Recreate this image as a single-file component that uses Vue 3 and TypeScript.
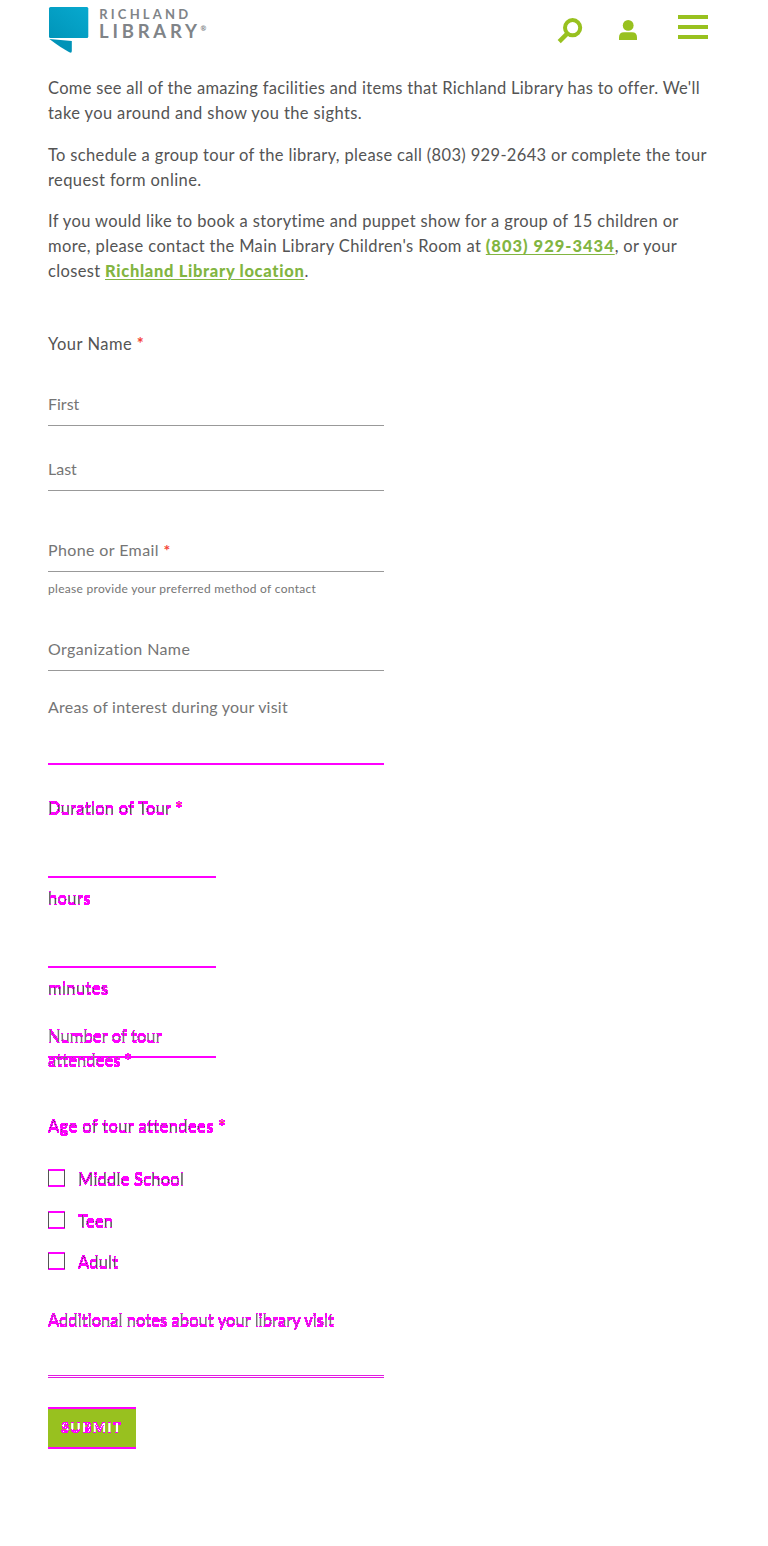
<script setup lang="ts">
interface Choice {
  id: string
  label: string
}

const ages: Choice[] = [
  { id: 'middle', label: 'Middle School' },
  { id: 'teen', label: 'Teen' },
  { id: 'adult', label: 'Adult' },
]
</script>

<template>
  <div class="page">
    <!-- Marks the edges between a shape and its vertically offset copy -->
    <svg class="defs" width="0" height="0" aria-hidden="true">
      <filter id="edge1" x="-5" y="-5" width="800" height="200" filterUnits="userSpaceOnUse" color-interpolation-filters="sRGB">
        <feOffset in="SourceAlpha" dy="1" result="moved" />
        <feComposite in="SourceAlpha" in2="moved" operator="arithmetic" k2="1" k3="-1" result="up" />
        <feComposite in="moved" in2="SourceAlpha" operator="arithmetic" k2="1" k3="-1" result="down" />
        <feMerge result="both"><feMergeNode in="up" /><feMergeNode in="down" /></feMerge>
        <feComponentTransfer in="both" result="mask"><feFuncA type="linear" slope="30" intercept="-2.4" /></feComponentTransfer>
        <feFlood flood-color="#ff00ff" />
        <feComposite in2="mask" operator="in" result="tint" />
        <feMerge><feMergeNode in="SourceGraphic" /><feMergeNode in="tint" /></feMerge>
      </filter>
    </svg>

    <header class="header">
      <svg class="logo" width="160" height="50" viewBox="0 0 160 50" role="img" aria-label="Richland Library">
        <defs>
          <linearGradient id="flag" x1="1" y1="0" x2="0" y2="1">
            <stop offset="0" stop-color="#08a9cf" />
            <stop offset="1" stop-color="#0095b9" />
          </linearGradient>
        </defs>
        <rect x="1" y="3" width="39.3" height="31" rx="1.5" fill="url(#flag)" />
        <path d="M1.3 35 L23.8 37 V47 Q23.8 49.6 21.3 48.2 L12.5 43 Q6 38.5 1.3 35Z" fill="#0093b8" />
        <text class="brand" x="51.2" y="14.6" font-size="13" textLength="89" lengthAdjust="spacing">RICHLAND</text>
        <text class="brand" x="51" y="34" font-size="18.5" textLength="98" lengthAdjust="spacing">LIBRARY</text>
        <text class="brand" x="152.4" y="26.5" font-size="7">®</text>
      </svg>
      <nav class="tools">
        <svg class="search" width="26" height="26" viewBox="0 0 26 26" fill="none" stroke="#98c11f" stroke-width="4">
          <circle cx="15.6" cy="9.7" r="7.6" /><path d="M10.2 15.6 L2.2 23.6" stroke-width="4.4" />
        </svg>
        <svg class="user" width="18" height="20" viewBox="0 0 18 20" fill="#98c11f">
          <circle cx="9.2" cy="5.4" r="5.4" /><path d="M0 20 V17.5 Q0 12.2 5 12.2 H13 Q18 12.2 18 17.5 V20Z" />
        </svg>
        <div class="menu"><i></i><i></i><i></i></div>
      </nav>
    </header>

    <main>
      <div class="intro">
        <p><span class="l1">Come see all of the amazing facilities and items that Richland Library has to offer. We'll</span><br /><span class="l2">take you around and show you the sights.</span></p>
        <p>To schedule a group tour of the library, please call (803) 929-2643 or complete the tour<br /><span class="l2">request form online.</span></p>
        <p><span class="l5">If you would like to book a storytime and puppet show for a group of 15 children or</span><br /><span class="l6">more, please contact the Main Library Children's Room at </span><a class="tel">(803) 929-3434</a><span class="l7">, or your</span><br />closest <a>Richland Library location</a>.</p>
      </div>

      <form class="form" @submit.prevent>
        <div class="legend"><span class="yn">Your Name</span> <b class="red">*</b></div>
        <div class="field first"><span class="tight">First</span></div>
        <div class="field last"><span class="tight">Last</span></div>
        <div class="field phone"><span>Phone or Email</span> <b class="red">*</b></div>
        <div class="help">please provide your preferred method of contact</div>
        <div class="field org"><span>Organization Name</span></div>
        <div class="areas">Areas of interest during your visit</div>
        <div class="rule edge areas-rule"></div>

        <div class="row edge duration">Duration of Tour <b class="red">*</b></div>
        <div class="rule short edge r1"></div>
        <div class="row edge hours">hours</div>
        <div class="rule short edge r2"></div>
        <div class="row edge minutes">minutes</div>
        <div class="attendees edge">
          <div><span class="num">Number of tour</span><br /><span>attendees <b class="red">*</b></span></div>
          <div class="rule short over"></div>
        </div>

        <div class="row edge age">Age of tour attendees <b class="red">*</b></div>
        <div class="choices">
          <label v-for="c in ages" :key="c.id" :class="['choice', c.id]">
            <i class="box edge"></i><span class="edge">{{ c.label }}</span>
          </label>
        </div>

        <div class="row edge notes">Additional notes about your library visit</div>
        <div class="double"></div>
        <button class="submit" type="submit"><span class="edge">SUBMIT</span></button>
      </form>
    </main>
  </div>
</template>

<style>
body { margin: 0; background: #fff; }
</style>

<style scoped>
.page { position: relative; width: 768px; height: 1546px; overflow: hidden; background: #fff; font-family: Lato, "Open Sans", sans-serif; color: #545454; }
.defs { position: absolute; }
.header { display: flex; height: 60px; padding: 4px 60px 0 48px; box-sizing: border-box; justify-content: space-between; }
.logo { display: block; }
.brand { font-family: Lato, sans-serif; font-weight: 700; fill: #808488; }
.tools { display: flex; align-items: flex-start; }
.search { margin: 14px 36px 0 0; }
.user { margin: 16px 41px 0 0; }
.menu { display: flex; flex-direction: column; gap: 6px; width: 30px; padding-top: 11px; }
.menu i { height: 4px; background: #98c11f; }
main { padding: 0 48px; }
.intro { height: 272px; padding-top: 16px; box-sizing: border-box; font-size: 16.5px; line-height: 25px; letter-spacing: .342px; white-space: nowrap; }
.intro p { margin: 0 0 16.6px; }
.l1 { letter-spacing: .312px; }
.l2 { letter-spacing: .39px; }
.l5 { letter-spacing: .375px; }
.l6 { letter-spacing: .375px; }
.l7 { letter-spacing: .3px; }
a { color: #82b541; font-weight: 900; letter-spacing: .68px; text-decoration: underline; text-decoration-thickness: 1px; text-underline-offset: 2px; text-decoration-skip-ink: auto; }
.tel { letter-spacing: 1px; }
.red { color: #f44336; font-weight: 700; }
.form { margin: 0; white-space: nowrap; }
.legend { height: 24px; line-height: 24px; font-size: 16.5px; letter-spacing: .3px; }
.yn { letter-spacing: .5px; }
.field { width: 336px; height: 34px; box-sizing: border-box; border-bottom: 1px solid #999; font-size: 16px; line-height: 24px; letter-spacing: .39px; color: #757575; }
.tight { letter-spacing: 0; }
.first { margin-top: 36px; }
.last { margin-top: 31px; }
.phone { margin-top: 47px; }
.help { height: 16px; margin-top: 9px; font-size: 12px; line-height: 16px; letter-spacing: .29px; color: #757575; }
.org { margin-top: 40px; }
.areas { height: 24px; margin-top: 24px; font-size: 16px; line-height: 24px; letter-spacing: .23px; color: #757575; }
.rule { width: 336px; height: 1px; background: #999; }
.short { width: 168px; }
.edge { filter: url(#edge1); }
.row { height: 24px; font-size: 16.5px; line-height: 24px; letter-spacing: .28px; }
.areas-rule { margin-top: 44px; }
.duration { margin-top: 32px; }
.r1 { margin-top: 56px; }
.hours { margin-top: 9px; letter-spacing: .4px; }
.r2 { margin-top: 56px; }
.minutes { margin-top: 9px; letter-spacing: .4px; }
.attendees { display: grid; height: 48px; margin-top: 24px; font-size: 16.5px; line-height: 24px; letter-spacing: .1px; color: #757575; }
.attendees > * { grid-area: 1 / 1; }
.over { margin-top: 32px; }
.age { margin-top: 42px; letter-spacing: .4px; }
.choices { display: flex; flex-direction: column; margin-top: 31px; }
.choice { display: flex; gap: 13px; height: 42px; font-size: 16.5px; letter-spacing: .23px; line-height: 20px; }
.teen { height: 41px; }
.box { width: 17px; height: 17px; box-sizing: border-box; border: 1px solid #545454; }
.notes { margin-top: 14px; letter-spacing: .06px; color: #757575; }
.double { width: 336px; height: 3px; margin-top: 43px; box-sizing: border-box; border: solid #e21ae2; border-width: 1px 0; }
.submit { display: block; width: 88px; height: 42px; margin-top: 29px; padding: 0 0 2px; border: solid #ff00ff; border-width: 2px 0; background: #98c11f; color: #fff; font: 900 14px/36px Lato, sans-serif; letter-spacing: 1.3px; }
.submit span { display: block; }
</style>
